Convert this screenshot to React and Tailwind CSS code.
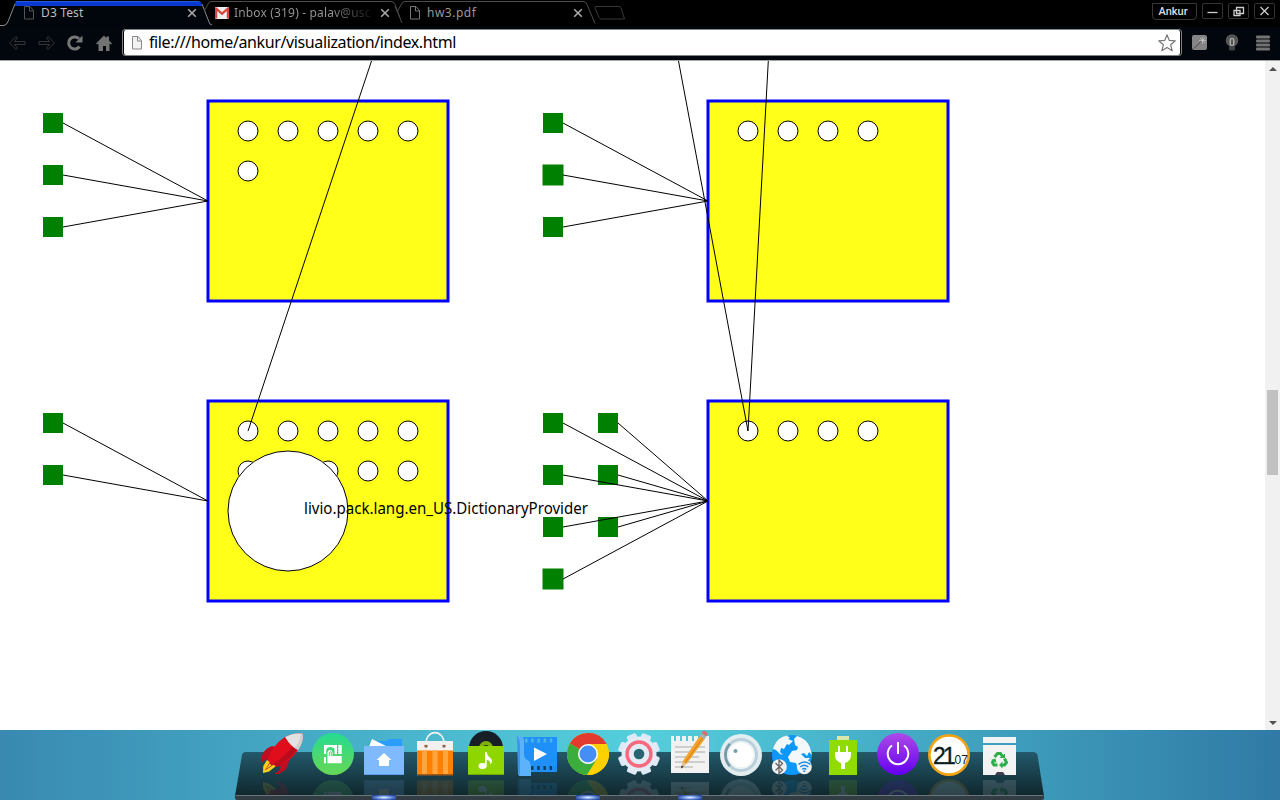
import React from "react";

const UI = "font-['Noto_Sans','Open_Sans',sans-serif]";

/* ---------- Browser chrome ---------- */

function PageIcon({ className, stroke = "#777", fill = "none" }) {
  return (
    <svg className={className} width="12" height="16" viewBox="0 0 12 16">
      <path d="M1.5 1.5h5.5l3.5 4v8.500h-9z" fill={fill} stroke={stroke} />
      <path d="M6.500 1.500v4.500h4" fill="none" stroke={stroke} />
    </svg>
  );
}

function Cross({ className }) {
  return (
    <svg className={className} width="10" height="10" viewBox="0 0 10 10">
      <path d="M1.200 1.200l7.600 7.600M8.800 1.200l-7.600 7.600" stroke="#a9a9a9" strokeWidth="1.600" />
    </svg>
  );
}

function GmailIcon() {
  return (
    <svg className="shrink-0" width="14" height="12" viewBox="0 0 14 12">
      <rect width="14" height="12" rx="1" fill="#eee" />
      <path d="M0 1v10.500h2.200V4L7 8.200 11.800 4v7.500H14V1L13 0 7 5.300 1 0z" fill="#d8453a" />
    </svg>
  );
}

function TabStrip() {
  return (
    <div className="relative flex h-[27px] shrink-0 items-start bg-black">
      <svg className="absolute left-0 top-0" width="640" height="27" viewBox="0 0 640 27">
        <path d="M0 26.500Q6 26 8 21L15 3Q16 1.500 18 1.500H198Q201 1.500 202 4L209 22Q210 25 213 26V27H0z" fill="#01050c" />
        <path d="M16 1h183q2 0 3 5H15q0-4 1-5z" fill="#0739d2" />
        <path d="M0 25.500H4Q7 24.500 8 21.500L15 4M202 4l7 18q1 3 3 3" fill="none" stroke="#8d8d8d" />
        <path d="M16 1.500H199" stroke="#2d58d8" />
        <path d="M204 12l4-8q1-2.500 3-2.500H391q3 0 4 3l5 13M402 23l-7-17M397 12l4-7q1-3.500 4-3.500H583q3 0 4 3l8 19" fill="none" stroke="#4c4c4c" />
        <path d="M596 6.500h23q1.500 0 2 1.500l3.500 11h-23q-2 0-2.500-1.500L595 8q0-1.500 1-1.500z" fill="none" stroke="#393939" />
      </svg>
      <div className="relative flex h-[26px] w-[203px] items-center pl-[23px]">
        <PageIcon className="-mt-px" stroke="#555" />
        <span className={`${UI} ml-[6px] flex-1 text-[12px] leading-[26px] tracking-[0.15px] text-[#bdbdbd]`}>D3 Test</span>
        <Cross className="mr-[6px]" />
      </div>
      <div className="relative flex h-[26px] w-[195px] items-center pl-[12px]">
        <GmailIcon />
        <span className={`${UI} ml-[5px] w-[138px] overflow-hidden whitespace-nowrap bg-gradient-to-r from-[#999] from-70% to-[#111] bg-clip-text text-[12px] leading-[26px] tracking-[0.16px] text-transparent`}>
          Inbox (319) - palav@usc
        </span>
        <Cross className="ml-[8px]" />
      </div>
      <div className="relative flex h-[26px] w-[190px] items-center pl-[11px]">
        <PageIcon className="-mt-px" />
        <span className={`${UI} ml-[6px] flex-1 text-[12px] leading-[26px] tracking-[0.5px] text-[#999]`}>hw3.pdf</span>
        <Cross className="mr-[5px]" />
      </div>
      <div className="ml-auto flex gap-[5px] pr-[4px] pt-[3px]">
        <div className="mr-px h-[17px] w-[45px] rounded-b-[4px] border border-[#383838] pr-[3px] text-center font-[Roboto,sans-serif] text-[11px] font-medium leading-[15px] text-[#ddd]">
          Ankur
        </div>
        {["M5.500 9.500h10", "M8.500 4.500h7v6h-7zM6 7.500h6v5H6z", "M6.500 4l8 8M14.500 4l-8 8"].map((d) => (
          <svg key={d} className="-ml-px mr-px h-[16px] w-[21px]" viewBox="0 0 21 16">
            <rect x=".5" y=".5" width="20" height="15" rx="1.500" fill="none" stroke="#343434" />
            <path d={d} fill="none" stroke="#ccc" strokeWidth="1.300" />
          </svg>
        ))}
      </div>
    </div>
  );
}

function Toolbar() {
  return (
    <div className="flex h-[34px] shrink-0 items-start border-b border-[#a3a6a6] bg-[#02060d]">
      <div className="flex w-[122px] items-center gap-[11px] pl-[8px] pt-[7px]">
        <svg width="18" height="18" viewBox="0 0 18 18">
          <path d="M1.500 9L8 2.500l1.500 1.500L6.500 7.500H17v3H6.500l3 3.500L8 15.500z" fill="#060a10" stroke="#353535" />
        </svg>
        <svg className="ml-px -mr-px" width="18" height="18" viewBox="0 0 18 18">
          <path d="M16.500 9L10 2.500 8.500 4l3 3.500H1v3h10.500l-3 3.500 1.500 1.500z" fill="#060a10" stroke="#353535" />
        </svg>
        <svg width="18" height="18" viewBox="0 0 18 18">
          <path d="M13.500 12.500A6 6 0 1 1 13 4.800" fill="none" stroke="#777" strokeWidth="3" />
          <path d="M16.500 1.500v7H9.500z" fill="#777" />
        </svg>
        <svg width="18" height="18" viewBox="0 0 18 18">
          <path d="M1 9.500L9 1.500l2.500 2.500V2.500H14v4l3 3-1 1-1.500-1V17H11v-5H8v5H3.500V9.500L2 10.500z" fill="#737373" />
        </svg>
      </div>
      <div className="mt-[2px] flex h-[27px] w-[1060px] items-center rounded-[3px] border border-[#7d8283] bg-black p-px">
        <div className="flex h-[25px] flex-1 items-center rounded-[2px] bg-white pl-[7px] pr-[3px]">
          <PageIcon stroke="#888" fill="#f2f2f2" />
          <span className={`${UI} ml-[6px] flex-1 text-[16px] leading-[25px] tracking-[-0.38px] text-black`}>
            file:///home/ankur/visualization/index.html
          </span>
          <svg width="20" height="20" viewBox="0 0 20 20">
            <path d="M10 1.800l2.300 5.600 6 .4-4.600 4 1.500 6-5.200-3.300-5.200 3.300 1.500-6-4.600-4 6-.4z" fill="#fff" stroke="#777" strokeWidth="1.200" strokeLinejoin="round" />
          </svg>
        </div>
      </div>
      <div className="flex flex-1 items-center justify-between pl-[10px] pr-[10px] pt-[7px]">
        <svg width="15" height="15" viewBox="0 0 15 15">
          <rect width="15" height="15" rx="2" fill="#858585" />
          <path d="M10.500 2v7M7 5.500h7M8 3l5 5M13 3l-5 5" stroke="#d2d2d2" strokeWidth=".6" />
          <path d="M2 13.500l7.500-7.500" stroke="#444" />
        </svg>
        <svg width="14" height="17" viewBox="0 0 14 17">
          <circle cx="7" cy="6.500" r="6.300" fill="#555" />
          <rect x="4" y="11.500" width="6" height="5" rx="1.500" fill="#444" />
          <rect x="5.200" y="4.500" width="3.600" height="7" rx="1.800" fill="none" stroke="#bbb" strokeWidth="1.200" />
        </svg>
        <svg width="14" height="16" viewBox="0 0 14 16">
          {[0, 4, 8, 12].map((y) => (
            <rect key={y} y={y + 0.5} width="14" height="3" rx="1" fill="#737373" />
          ))}
        </svg>
      </div>
    </div>
  );
}

/* ---------- Diagram ---------- */

const BOXES = [
  { x: 208, y: 101, dots: 6 },
  { x: 708, y: 101, dots: 4 },
  { x: 208, y: 401, dots: 10 },
  { x: 708, y: 401, dots: 4 },
];

// [left, top, target x, target y, outlined]
const NODES = [
  [43, 113, 208, 201], [43, 165, 208, 201], [43, 217, 208, 201],
  [543, 113, 708, 201], [543, 165, 708, 201, true], [543, 217, 708, 201],
  [43, 413, 208, 501], [43, 465, 208, 501],
  [543, 413, 708, 501], [543, 465, 708, 501], [543, 517, 708, 501], [543, 569, 708, 501, true],
  [598, 413, 708, 501], [598, 465, 708, 501], [598, 517, 708, 501],
];

const LINKS = [
  [371.500, 61, 248, 431],
  [678.500, 61, 748, 431],
  [768.300, 61, 748, 431],
];

function Diagram() {
  return (
    <svg className="block" width="1265" height="669" viewBox="0 61 1265 669">
      {BOXES.map((b) => (
        <g key={`${b.x}-${b.y}`}>
          <rect x={b.x} y={b.y} width="240" height="200" fill="#ffff1a" stroke="#0000ff" strokeWidth="3" />
          {Array.from({ length: b.dots }, (_, i) => (
            <circle key={i} cx={b.x + 40 + (i % 5) * 40} cy={b.y + 30 + Math.floor(i / 5) * 40} r="10" fill="#fff" stroke="#000" />
          ))}
        </g>
      ))}
      {NODES.map(([x, y, , , outlined], i) => (
        <rect key={i} x={x} y={y} width="20" height="20" fill="#008000" stroke={outlined ? "#008000" : "none"} />
      ))}
      {NODES.map(([x, y, tx, ty], i) => (
        <line key={i} x1={x + 20} y1={y + 10} x2={tx} y2={ty} stroke="#000" />
      ))}
      {LINKS.map(([x1, y1, x2, y2], i) => (
        <line key={i} x1={x1} y1={y1} x2={x2} y2={y2} stroke="#000" />
      ))}
      <circle cx="288" cy="511" r="60" fill="#fff" stroke="#000" />
      <text x="304" y="514" className={UI} fontSize="16" textLength="284" lengthAdjust="spacingAndGlyphs">
        livio.pack.lang.en_US.DictionaryProvider
      </text>
    </svg>
  );
}

function ScrollBar() {
  return (
    <div className="flex w-[15px] flex-col items-center bg-[#f1f1f1]">
      <svg className="mt-[6px]" width="8" height="4" viewBox="0 0 8 4"><path d="M4 0l4 4H0z" fill="#505050" /></svg>
      <div className="mt-[319px] h-[85px] w-[11px] bg-[#c1c1c1]" />
      <svg className="mb-[5px] mt-auto" width="8" height="4" viewBox="0 0 8 4"><path d="M0 0h8L4 4z" fill="#505050" /></svg>
    </div>
  );
}

/* ---------- Dock ---------- */

const rocket = (
  <g>
    <path d="M16 16Q10 17 6 23 3.500 27 4.500 32.500L9 29.500 13 30 24 37Q23 41 17.500 43.500 21 45 24 42.500 31 40 32 30L25 22z" fill="#c00d20" />
    <path d="M10 30L6.300 36 6 43 12 41.500 19 36 15 31z" fill="#ffd21a" />
    <path d="M13 31.500L8 40.500 17 34.500z" fill="#c5101c" />
    <path d="M12.500 33.500L9.500 39l5-3.800z" fill="#ffd21a" />
    <path d="M28 7Q37 2 45.500 3.500Q47 12 41 20Q34 31 20 37L10.500 30.500Q15 15 28 7z" fill="#e00d1d" />
    <path d="M43 14Q36 28 20 37L16 34Q30 26 38 12z" fill="#b90c1d" />
    <path d="M28 7Q37 2 45.500 3.500Q47 12 41 20Q34 17 28 7z" fill="#e2e2e2" />
    <path d="M43.500 5l2-1.500Q47 12 41 20L37.500 17.800Q43 12 43.500 5z" fill="#cfcfcf" />
  </g>
);

const touch = (
  <g>
    <circle cx="25" cy="24" r="21" fill="url(#green)" />
    <path d="M16 15h13v9h-2.500v-5.500q-2-1.500-4-1.500-3.500 0-4.300 3V24H16zM30.300 15h3.400v9h-3.400zM16 27h2v6.300h-2z" fill="#fff" />
    <path d="M19.500 33.300V22.500q.3-2.500 2.500-2.500t2.500 2.500V26h9.200v7.300z" fill="#fff" />
    <path d="M21.300 26v-3q0-1.300 1-1.300t1 1.300v3" fill="none" stroke="#49d76c" strokeWidth="1" />
  </g>
);

const folder = (
  <g>
    <path d="M17 11h10l3-2h13v9H17z" fill="#2a9dff" />
    <path d="M13 9l16 8H10z" fill="#fff" />
    <rect x="5" y="16" width="40" height="29" fill="#7fbaff" />
    <path d="M5 44h40v1H5z" fill="#5b9ff0" />
    <path d="M25 23l7.500 7H30v6H20v-6h-2.500z" fill="#fff" />
  </g>
);

const bag = (
  <g>
    <path d="M7 11h36v10H7z" fill="#f1f1f1" />
    <path d="M7 20.500h36V45H7z" fill="#ff8000" />
    <path d="M12 20.500h5V45h-5zM22.500 20.500h5V45h-5zM33 20.500h5V45h-5z" fill="#ffa53d" />
    <path d="M7 44h36v1.500H7z" fill="#a85a12" />
    <circle cx="16" cy="16" r="1.700" fill="#8d6545" /><circle cx="34" cy="16" r="1.700" fill="#8d6545" />
    <path d="M16 15C15 -1.500 35-1.500 34 15" fill="none" stroke="#f1f1f1" strokeWidth="1.600" />
  </g>
);

const music = (
  <g>
    <circle cx="25" cy="18" r="17" fill="#171e26" />
    <circle cx="25" cy="18" r="7" fill="#7faf0b" /><circle cx="25" cy="18" r="3" fill="#222c20" />
    <rect x="7" y="16" width="36" height="29" fill="#8fd600" />
    <path d="M7 44h36v1H7z" fill="#6aa800" />
    <ellipse cx="21.500" cy="36" rx="4" ry="3" fill="#fff" />
    <path d="M24 37V22h1.700q.5 4 4 6.200 2.500 2.500 0 6.500 0-4-4-5v7z" fill="#fff" />
  </g>
);

const video = (
  <g>
    <path d="M10 7h34v35H10z" fill="#1e90f8" />
    <path d="M12 10.500H43" stroke="#4fb5df" strokeWidth="4" strokeDasharray="2.500 3.700" />
    <path d="M18 38H43" stroke="#0d3f63" strokeWidth="4" strokeDasharray="2.500 3.700" />
    <path d="M4 5q6 1 7 5v14q0 5 5 7 2 2 2 8v7H6z" fill="#5cb2fb" />
    <path d="M4 5q3 4 3 12v28H5z" fill="#3b96ea" />
    <path d="M21 17.500L34 24 21 31z" fill="#fff" />
  </g>
);

const chrome = (
  <g>
    <circle cx="25" cy="24" r="21" fill="#fdd000" />
    <path d="M25 24L6.800 13.500A21 21 0 0 1 43.200 13.500z" fill="#e23a2e" />
    <path d="M25 14h18.500A21 21 0 0 0 25 3z" fill="#e23a2e" />
    <path d="M6.800 13.500A21 21 0 0 0 24 45L34 29 25 24z" fill="#3aad3c" />
    <path d="M34 29L24 45A21 21 0 0 0 45.900 22L44 14H25z" fill="#fdd000" />
    <circle cx="25" cy="24" r="10" fill="#fff" /><circle cx="25" cy="24" r="8.500" fill="#448ef6" />
  </g>
);

const gear = (
  <g>
    {[0, 45, 90, 135].map((a) => (
      <rect key={a} x="20" y="3" width="10" height="42" rx="2" fill="#dfe9f6" transform={`rotate(${a + 22.5} 25 24)`} />
    ))}
    <circle cx="25" cy="24" r="11.500" fill="none" stroke="#e3ebf7" strokeWidth="12" />
    <circle cx="25" cy="24" r="8" fill="#e3ebf7" />
    <circle cx="25" cy="24" r="12" fill="none" stroke="#f7697d" strokeWidth="3.400" />
    <circle cx="25" cy="24" r="5.300" fill="#286571" />
  </g>
);

const notes = (
  <g>
    <path d="M6 6h3v5h2V6h4v5h2V6h4v5h2V6h4v5h2V6h4v5h2V6h9v37H6z" fill="#f2f2f2" />
    <path d="M10 17h30M10 22h30M10 27h24M10 32h30M10 37h18" stroke="#a9a9a9" strokeWidth="1" />
    <path d="M16 38.500l1.500-7 4 2.500z" fill="#e7c18e" /><path d="M16 38.500l.7-3 2 1.200z" fill="#222" />
    <path d="M17.500 31.500L35 5.500l5 3.300L21.500 34z" fill="#f3a329" />
    <path d="M20 33L38 7.500" stroke="#d37c16" strokeWidth="1" />
    <path d="M34.500 6l2-3 5 3.300-2 3z" fill="#a0b0b7" />
    <path d="M36.500 3l1.500-2q4 0 4.500 3.300l-1.200 2z" fill="#df6a66" />
  </g>
);

const dial = (
  <g>
    <circle cx="25" cy="25" r="21" fill="#e3edf0" />
    <circle cx="25" cy="25" r="17" fill="#b9d0da" />
    <path d="M14 36A16 16 0 0 1 14 14" fill="none" stroke="#7798a8" strokeWidth="3" />
    <circle cx="25" cy="25" r="14" fill="#edf4f5" /><circle cx="25" cy="25" r="12" fill="#fff" />
    <circle cx="19.500" cy="21" r="2" fill="#6f9eb0" />
  </g>
);

const globe = (
  <g>
    <circle cx="25" cy="25" r="20" fill="#0b98fa" />
    <path d="M7 16Q11 7 20 5.500L23 8 21 9l5 2-4 4-2-1-3 5-3-1-1 4 3 3-3-1-4-4-3-1zM27 9l3-3Q39 8 43 17L45 25 42 22l-2 4-3-3-3 1 4 4h5l-5 6-1 5-5 2-3-8-6-1-2-5 4-6 5-1 1-3-3-2z" fill="#f4f8fb" />
    <circle cx="12.300" cy="36.700" r="7.500" fill="#f2f2f2" />
    <path d="M8.500 33l7 7-3.500 3.500V30l3.500 3.500-7 7" fill="none" stroke="#666" strokeWidth="1.300" />
    <circle cx="37.300" cy="36.700" r="7.500" fill="#f2f2f2" />
    <path d="M31.500 34.500q6-5 12 0M33.300 37q4-3.500 8 0M35.300 39.500q2-2 4 0" fill="none" stroke="#198be8" strokeWidth="1.400" />
    <circle cx="37.300" cy="41.300" r="1" fill="#198be8" />
  </g>
);

const battery = (
  <g>
    <rect x="19" y="6" width="12" height="4" fill="#d8e8ad" />
    <rect x="11" y="10" width="28" height="35" fill="#91dc00" />
    <path d="M20 16h2v6h6v-6h2v6h3v3q0 6-6 8v6h-4v-6q-6-2-6-8v-3h3z" fill="#fff" />
  </g>
);

const power = (
  <g>
    <circle cx="25" cy="24" r="21" fill="url(#violet)" />
    <path d="M19 15.500a10.300 10.300 0 1 0 12 0M25 12v12" fill="none" stroke="#fff" strokeWidth="2" />
  </g>
);

const clockFace = (
  <g>
    <circle cx="25" cy="25" r="21" fill="#f5a313" /><circle cx="25" cy="25" r="18.300" fill="#fff" />
  </g>
);

const clock = (
  <g>
    {clockFace}
    <text x="9" y="34" className="font-['Liberation_Sans',sans-serif] font-bold" fontSize="24" textLength="18" lengthAdjust="spacingAndGlyphs" fill="#0b2021">
      21
      <tspan className="font-normal" fontSize="12">07</tspan>
    </text>
  </g>
);

const clockTime = (
  <g>
    {clockFace}
    <text x="9" y="34" className="font-['Liberation_Sans',sans-serif]" fontSize="23" letterSpacing="-2.800" fill="#0b2021" stroke="#0b2021" strokeWidth=".4">
      21<tspan dx="1.500" fontSize="12" letterSpacing="0" strokeWidth="0">07</tspan>
    </text>
  </g>
);

const trash = (
  <g transform="translate(-1 0)">
    <path d="M9 7h33v6H9zM9 15h33v30H9z" fill="#f3f3f3" />
    <path d="M21 45l2-3h6l2 3z" fill="#413d50" />
    <g fill="none" stroke="#2eae4a" strokeWidth="3">
      <path d="M20.500 27L23.500 23.500h3l2 3" />
      <path d="M30.500 28.500l2 4-2 2.500h-3" />
      <path d="M23.500 35h-3.500l-1.500-2.500 1.500-2.500" />
    </g>
    <path d="M25.500 28h5.500v-4.500zM28.500 31.500l-3.500 3.500 3.500 3.500zM17 30l4.500-1.500 1 4.500z" fill="#2eae4a" />
  </g>
);

const APPS = [
  { id: "launcher", art: rocket },
  { id: "touch", art: touch },
  { id: "files", art: folder, running: true },
  { id: "store", art: bag },
  { id: "music", art: music },
  { id: "video", art: video, nudge: true },
  { id: "browser", art: chrome, running: true },
  { id: "settings", art: gear },
  { id: "notes", art: notes, running: true },
  { id: "dial", art: dial },
  { id: "network", art: globe },
  { id: "battery", art: battery },
  { id: "power", art: power, gap: true },
  { id: "clock", art: clockTime, reflection: clockFace },
  { id: "trash", art: trash },
];

function Dock() {
  return (
    <div className="relative flex h-[70px] shrink-0 overflow-hidden bg-gradient-to-r from-[#3989b1] via-[#54cfdc] to-[#307aa5] pl-[257px]">
      <svg className="absolute left-0 top-0" width="1280" height="70" viewBox="0 0 1280 70">
        <defs>
          <linearGradient id="shelf" x1="0" y1="0" x2="0" y2="1">
            <stop offset="0" stopColor="#23596a" /><stop offset="1" stopColor="#10262d" />
          </linearGradient>
          <linearGradient id="green" x1="0" y1="0" x2="0" y2="1">
            <stop offset="0" stopColor="#25db91" /><stop offset="1" stopColor="#67d756" />
          </linearGradient>
          <linearGradient id="violet" x1="0" y1="0" x2="0" y2="1">
            <stop offset="0" stopColor="#ad4ae8" /><stop offset="1" stopColor="#6300ef" />
          </linearGradient>
          <radialGradient id="glow" cx=".5" cy=".5" r=".55">
            <stop offset="0" stopColor="#e9f4ff" /><stop offset=".5" stopColor="#779ce5" /><stop offset="1" stopColor="#2949a0" />
          </radialGradient>
          <clipPath id="mirror"><rect width="51" height="65" /></clipPath>
        </defs>
        <path d="M242 25q.5-3 4-3h787q3.500 0 4.500 3l6.500 41H235z" fill="url(#shelf)" />
        <path d="M235 65h809v3q0 2-3 2H238q-3 0-3-2z" fill="#323d43" />
        <path d="M236 65.500h807" stroke="#67767b" />
      </svg>
      {APPS.map(({ id, art, running, gap, nudge, reflection }) => (
        <svg
          key={id}
          className={`relative h-[70px] w-[51px] shrink-0 ${gap ? "ml-[4px]" : ""} ${nudge ? "ml-px -mr-px" : ""}`}
          viewBox="0 0 51 70"
        >
          <g clipPath="url(#mirror)">
            <g opacity=".13" transform="matrix(1 0 0 -1 0 95)">{reflection ?? art}</g>
          </g>
          {art}
          {running && <rect x="13" y="65" width="24" height="5" fill="url(#glow)" />}
        </svg>
      ))}
    </div>
  );
}

export default function App() {
  return (
    <div className="flex h-[800px] w-[1280px] flex-col overflow-hidden bg-white">
      <TabStrip />
      <Toolbar />
      <div className="flex h-[669px] shrink-0 bg-white">
        <Diagram />
        <ScrollBar />
      </div>
      <Dock />
    </div>
  );
}
